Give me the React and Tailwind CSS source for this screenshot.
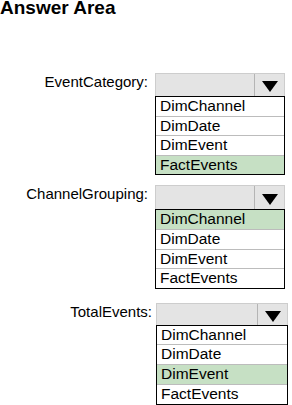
import React from "react";

const OPTIONS = ["DimChannel", "DimDate", "DimEvent", "FactEvents"];

function Dropdown({ selected, widthClass, headerH, rowH }) {
  return (
    <div className={`${widthClass} flex flex-col`}>
      <div className={`${headerH} flex border border-b-0 border-[#cdcdcd] bg-[#e4e4e4]`}>
        <div className="flex-1 border-r border-[#b4b4b4]" />
        <div className="w-[29px] flex items-center justify-center pt-[3px]">
          <svg width="16" height="11" viewBox="0 0 16 11">
            <polygon points="0,0 16,0 8,11" fill="#000" />
          </svg>
        </div>
      </div>
      <div className="border border-black bg-white">
        {OPTIONS.map((o, i) => (
          <div
            key={o}
            className={`${rowH[i]} ${i > 0 ? "border-t border-[#bcbcbc]" : ""} ${
              o === selected ? "bg-[#c6e0c4]" : "bg-white"
            } pl-[4px] text-[15.5px] leading-[17px] text-black whitespace-nowrap`}
          >
            {o}
          </div>
        ))}
      </div>
    </div>
  );
}

function Block({ label, selected, labelW, gap, widthClass, headerH, rowH, mt }) {
  return (
    <div className={`flex items-start ${mt}`}>
      <div className={`${labelW} ${gap} text-right text-[15px] leading-[18px] text-black whitespace-nowrap`}>
        {label}
      </div>
      <Dropdown selected={selected} widthClass={widthClass} headerH={headerH} rowH={rowH} />
    </div>
  );
}

export default function App() {
  return (
    <div
      className="w-[292px] h-[405px] bg-white overflow-hidden"
      style={{ fontFamily: '"Liberation Sans", Arial, sans-serif' }}
    >
      <div className="h-[17px] text-[19px] leading-[15px] font-bold text-black whitespace-nowrap">
        Answer Area
      </div>
      <Block
        label="EventCategory:"
        selected="FactEvents"
        labelW="w-[155px]"
        gap="pr-[7px]"
        widthClass="w-[130px]"
        headerH="h-[23px]"
        rowH={["h-[19px]", "h-[19px]", "h-[20px]", "h-[19px]"]}
        mt="mt-[56px]"
      />
      <Block
        label="ChannelGrouping:"
        selected="DimChannel"
        labelW="w-[155px]"
        gap="pr-[7px]"
        widthClass="w-[130px]"
        headerH="h-[24px]"
        rowH={["h-[19px]", "h-[20px]", "h-[19px]", "h-[20px]"]}
        mt="mt-[10px]"
      />
      <Block
        label="TotalEvents:"
        selected="DimEvent"
        labelW="w-[156px]"
        gap="pr-[4px]"
        widthClass="w-[132px]"
        headerH="h-[22px]"
        rowH={["h-[18px]", "h-[20px]", "h-[20px]", "h-[20px]"]}
        mt="mt-[14px]"
      />
    </div>
  );
}
